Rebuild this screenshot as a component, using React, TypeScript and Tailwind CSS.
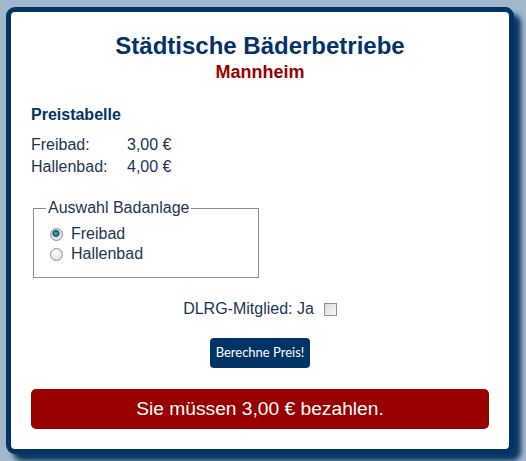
import React, { useState } from "react";

const PRICES = [
  { name: "Freibad", price: 3 },
  { name: "Hallenbad", price: 4 },
];

function formatEuro(v: number) {
  return v.toFixed(2).replace(".", ",") + " €";
}

export default function App() {
  const [bad, setBad] = useState("Freibad");
  const [dlrg, setDlrg] = useState(false);

  const price = PRICES.find((p) => p.name === bad)?.price ?? 0;

  return (
    <div
      className="min-h-[461px] w-full bg-[#a3b7cb] pt-[7px] pl-[6px]"
      style={{ fontFamily: '"Liberation Sans", Arial, sans-serif' }}
    >
      <div className="box-border w-[508px] rounded-[9px] border-[5px] border-[#003366] bg-white px-5 pt-5 pb-5 shadow-[7px_7px_5px_#0b3763]">
        {/* Kopf */}
        <h1 className="text-center text-[24px] leading-[28px] font-bold text-[#003366]">
          Städtische Bäderbetriebe
        </h1>
        <h2 className="mt-[1px] text-center text-[18px] leading-[22px] font-bold text-[#990000]">
          Mannheim
        </h2>

        {/* Preistabelle */}
        <h3 className="mt-[22px] text-[16px] leading-[20px] font-bold text-[#003366]">
          Preistabelle
        </h3>
        <div className="mt-[9px] grid grid-cols-[96px_auto] text-[16px] leading-[22px] text-[#1c3553]">
          {PRICES.map((p) => (
            <React.Fragment key={p.name}>
              <span>{p.name}:</span>
              <span>{formatEuro(p.price)}</span>
            </React.Fragment>
          ))}
        </div>

        {/* Auswahl */}
        <fieldset className="mt-[20px] ml-[2px] w-[226px] border border-[#8c8c8c] px-3 pb-[13px] text-[16px] leading-[20px] text-[#1c3553]">
          <legend className="px-0.5">Auswahl Badanlage</legend>
          <div className="mt-[6px] flex flex-col">
            {PRICES.map((p) => (
              <label key={p.name} className="flex items-center">
                <input
                  type="radio"
                  name="bad"
                  checked={bad === p.name}
                  onChange={() => setBad(p.name)}
                  className="ml-[4px] mr-[8px] h-[13px] w-[13px] appearance-none rounded-full border border-[#8e8f8f] bg-[radial-gradient(circle_at_40%_35%,#ffffff_0,#e6e6e6_60%,#cfcfcf_100%)] checked:bg-[radial-gradient(circle_at_45%_40%,#5fc0e0_0,#1a7499_2px,#0d4f6c_3px,#dedede_4px,#f2f2f2_100%)]"
                />
                {p.name}
              </label>
            ))}
          </div>
        </fieldset>

        {/* DLRG */}
        <div className="mt-[21px] flex items-center justify-center text-[16px] leading-[20px] text-[#1c3553]">
          <span>DLRG-Mitglied: Ja</span>
          <input
            type="checkbox"
            checked={dlrg}
            onChange={(e) => setDlrg(e.target.checked)}
            className="ml-[10px] h-[13px] w-[13px] appearance-none border border-[#8e8f8f] bg-gradient-to-br from-[#dcdcdc] to-[#f7f7f7] checked:bg-[#1a7499]"
          />
        </div>

        <div className="mt-[19px] flex justify-center">
          <button
            className="h-[30px] rounded-[4px] bg-[#003366] px-[6px] text-[13px] text-white"
            style={{ fontFamily: "Lato, sans-serif" }}
          >
            Berechne Preis!
          </button>
        </div>

        {/* Ergebnis */}
        <div className="mt-[21px] flex h-[40px] items-center justify-center rounded-[5px] bg-[#990000] text-[19.2px] text-white">
          Sie müssen {formatEuro(dlrg ? price * 0.8 : price)} bezahlen.
        </div>
      </div>
    </div>
  );
}
